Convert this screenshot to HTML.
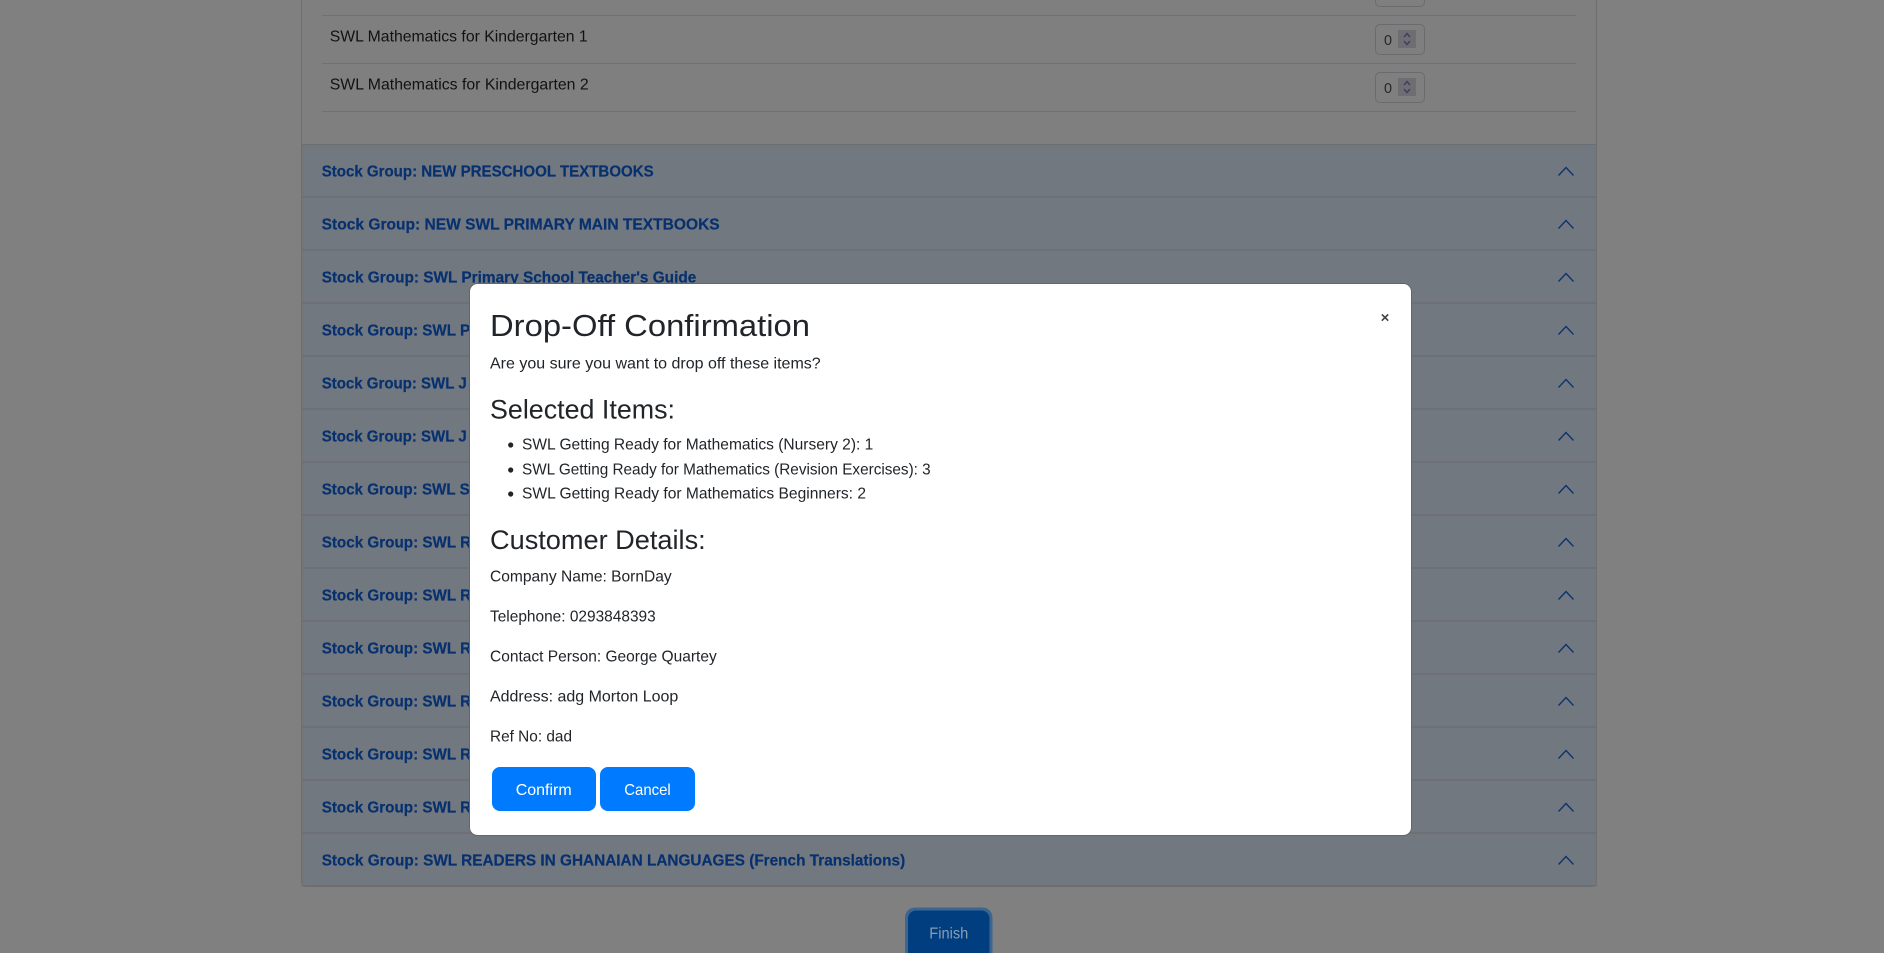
<!DOCTYPE html>
<html lang="en">
<head>
<meta charset="utf-8">
<title>Drop-Off Confirmation</title>
<style>
html,body{margin:0;padding:0;width:1884px;height:953px;overflow:hidden;background:#808080}
svg{display:block;position:absolute;left:0;top:0}
text{font-family:"Liberation Sans",Arial,sans-serif}
.row{font-size:16px;fill:#111213}
.hd{font-size:15.5px;font-weight:700;fill:#07306f;stroke:#07306f;stroke-width:.2}
.chev{fill:none;stroke:#08336f;stroke-width:1.3}
.div{fill:#6e7075}
.m{font-size:16px;fill:#212529}
.h2{font-size:31px;fill:#212529}
.h3{font-size:27px;fill:#212529}
.btn{font-size:16px;fill:#fff}
.sp{fill:none;stroke:#3f3c68;stroke-width:1.4}
</style>
</head>
<body>
<svg width="1884" height="953" viewBox="0 0 1884 953" xmlns="http://www.w3.org/2000/svg">
  <rect width="1884" height="953" fill="#808080"/>
  <!-- card -->
  <rect x="301.5" y="-10" width="1295" height="896.5" rx="4" fill="#7f7f7f" stroke="#6f6f6f"/>
  <!-- table rows -->
  <rect x="322" y="15" width="1254" height="1" fill="#6f7173"/>
  <rect x="322" y="63" width="1254" height="1" fill="#6f7173"/>
  <rect x="322" y="111" width="1254" height="1" fill="#6f7173"/>
  <text class="row" x="329.7" y="41.6" textLength="258" lengthAdjust="spacingAndGlyphs">SWL Mathematics for Kindergarten 1</text>
  <text class="row" x="329.7" y="89.6" textLength="259" lengthAdjust="spacingAndGlyphs">SWL Mathematics for Kindergarten 2</text>
  <rect x="1375.5" y="-24.5" width="49" height="31" rx="4.5" fill="none" stroke="#696b6e"/>
  <rect x="1375.5" y="24.5" width="49" height="30" rx="4.5" fill="none" stroke="#696b6e"/>
  <rect x="1375.5" y="72.5" width="49" height="30" rx="4.5" fill="none" stroke="#696b6e"/>
  <text class="row" x="1384" y="45" font-size="15" textLength="8" lengthAdjust="spacingAndGlyphs" style="font-size:15px;fill:#26282b">0</text>
  <text class="row" x="1384" y="93" font-size="15" textLength="8" lengthAdjust="spacingAndGlyphs" style="font-size:15px;fill:#26282b">0</text>
  <rect x="1398" y="30" width="18" height="18" fill="#6e6e72"/>
  <rect x="1398" y="78" width="18" height="18" fill="#6e6e72"/>
  <path class="sp" d="M1404 37 L1407 33.5 L1410 37 M1404 41 L1407 44.5 L1410 41"/>
  <path class="sp" d="M1404 85 L1407 81.5 L1410 85 M1404 89 L1407 92.5 L1410 89"/>
  <!-- accordion headers -->
  <rect x="302" y="144" width="1294" height="742" fill="#72787f"/>
  <rect x="302" y="144" width="1294" height="1" fill="#6c6e72"/>
  <rect class="div" x="302" y="196" width="1294" height="2"/>
  <rect class="div" x="302" y="249" width="1294" height="2"/>
  <rect class="div" x="302" y="302" width="1294" height="2"/>
  <rect class="div" x="302" y="355" width="1294" height="2"/>
  <rect class="div" x="302" y="408" width="1294" height="2"/>
  <rect class="div" x="302" y="461" width="1294" height="2"/>
  <rect class="div" x="302" y="514" width="1294" height="2"/>
  <rect class="div" x="302" y="567" width="1294" height="2"/>
  <rect class="div" x="302" y="620" width="1294" height="2"/>
  <rect class="div" x="302" y="673" width="1294" height="2"/>
  <rect class="div" x="302" y="726" width="1294" height="2"/>
  <rect class="div" x="302" y="779" width="1294" height="2"/>
  <rect class="div" x="302" y="832" width="1294" height="2"/>
  <rect x="302" y="885" width="1294" height="1.5" fill="#6c6e72"/>
  <rect x="301.5" y="144" width="1" height="742" fill="#6f6f6f"/>
  <rect x="1596" y="144" width="1" height="742" fill="#6f6f6f"/>

  <text class="hd" x="321.7" y="176.7" textLength="332" lengthAdjust="spacingAndGlyphs">Stock Group: NEW PRESCHOOL TEXTBOOKS</text>
  <text class="hd" x="321.7" y="229.7" textLength="398" lengthAdjust="spacingAndGlyphs">Stock Group: NEW SWL PRIMARY MAIN TEXTBOOKS</text>
  <text class="hd" x="321.7" y="282.7" textLength="374.6" lengthAdjust="spacingAndGlyphs">Stock Group: SWL Primary School Teacher's Guide</text>
  <text class="hd" x="321.7" y="335.7" textLength="148.5" lengthAdjust="spacingAndGlyphs">Stock Group: SWL P</text>
  <text class="hd" x="321.7" y="388.7" textLength="145" lengthAdjust="spacingAndGlyphs">Stock Group: SWL J</text>
  <text class="hd" x="321.7" y="441.7" textLength="145" lengthAdjust="spacingAndGlyphs">Stock Group: SWL J</text>
  <text class="hd" x="321.7" y="494.7" textLength="148" lengthAdjust="spacingAndGlyphs">Stock Group: SWL S</text>
  <text class="hd" x="321.7" y="547.7" textLength="149.5" lengthAdjust="spacingAndGlyphs">Stock Group: SWL R</text>
  <text class="hd" x="321.7" y="600.7" textLength="149.5" lengthAdjust="spacingAndGlyphs">Stock Group: SWL R</text>
  <text class="hd" x="321.7" y="653.7" textLength="149.5" lengthAdjust="spacingAndGlyphs">Stock Group: SWL R</text>
  <text class="hd" x="321.7" y="706.7" textLength="149.5" lengthAdjust="spacingAndGlyphs">Stock Group: SWL R</text>
  <text class="hd" x="321.7" y="759.7" textLength="149.5" lengthAdjust="spacingAndGlyphs">Stock Group: SWL R</text>
  <text class="hd" x="321.7" y="812.7" textLength="149.5" lengthAdjust="spacingAndGlyphs">Stock Group: SWL R</text>
  <text class="hd" x="321.7" y="865.7" textLength="583.5" lengthAdjust="spacingAndGlyphs">Stock Group: SWL READERS IN GHANAIAN LANGUAGES (French Translations)</text>

  <path class="chev" d="M1558.5 175.5 L1566 167.5 L1573.5 175.5"/>
  <path class="chev" d="M1558.5 228.5 L1566 220.5 L1573.5 228.5"/>
  <path class="chev" d="M1558.5 281.5 L1566 273.5 L1573.5 281.5"/>
  <path class="chev" d="M1558.5 334.5 L1566 326.5 L1573.5 334.5"/>
  <path class="chev" d="M1558.5 387.5 L1566 379.5 L1573.5 387.5"/>
  <path class="chev" d="M1558.5 440.5 L1566 432.5 L1573.5 440.5"/>
  <path class="chev" d="M1558.5 493.5 L1566 485.5 L1573.5 493.5"/>
  <path class="chev" d="M1558.5 546.5 L1566 538.5 L1573.5 546.5"/>
  <path class="chev" d="M1558.5 599.5 L1566 591.5 L1573.5 599.5"/>
  <path class="chev" d="M1558.5 652.5 L1566 644.5 L1573.5 652.5"/>
  <path class="chev" d="M1558.5 705.5 L1566 697.5 L1573.5 705.5"/>
  <path class="chev" d="M1558.5 758.5 L1566 750.5 L1573.5 758.5"/>
  <path class="chev" d="M1558.5 811.5 L1566 803.5 L1573.5 811.5"/>
  <path class="chev" d="M1558.5 864.5 L1566 856.5 L1573.5 864.5"/>

  <!-- finish button -->
  <rect x="905" y="907.5" width="87.5" height="70" rx="10" fill="#3c668f"/>
  <rect x="908" y="910.5" width="81.5" height="64" rx="8" fill="#003e80"/>
  <text x="929.3" y="938.5" font-size="16" fill="#8a9db3" textLength="39" lengthAdjust="spacingAndGlyphs">Finish</text>

  <!-- modal -->
  <rect x="469.5" y="283.5" width="942" height="552" rx="8" fill="#fff" stroke="#666"/>
  <text class="h2" x="490" y="336.2" textLength="320" lengthAdjust="spacingAndGlyphs">Drop-Off Confirmation</text>
  <text class="m" x="490" y="368.4" textLength="330.7" lengthAdjust="spacingAndGlyphs">Are you sure you want to drop off these items?</text>
  <text class="h3" x="490" y="418.3" textLength="185" lengthAdjust="spacingAndGlyphs">Selected Items:</text>
  <circle cx="510.7" cy="445" r="2.6" fill="#212529"/>
  <circle cx="510.7" cy="470" r="2.6" fill="#212529"/>
  <circle cx="510.7" cy="494" r="2.6" fill="#212529"/>
  <text class="m" x="522" y="449.7" textLength="351.3" lengthAdjust="spacingAndGlyphs">SWL Getting Ready for Mathematics (Nursery 2): 1</text>
  <text class="m" x="522" y="474.7" textLength="408.7" lengthAdjust="spacingAndGlyphs">SWL Getting Ready for Mathematics (Revision Exercises): 3</text>
  <text class="m" x="522" y="498.7" textLength="344" lengthAdjust="spacingAndGlyphs">SWL Getting Ready for Mathematics Beginners: 2</text>
  <text class="h3" x="490" y="549" textLength="215.7" lengthAdjust="spacingAndGlyphs">Customer Details:</text>
  <text class="m" x="490" y="581.5" textLength="181.7" lengthAdjust="spacingAndGlyphs">Company Name: BornDay</text>
  <text class="m" x="490" y="621.5" textLength="165.7" lengthAdjust="spacingAndGlyphs">Telephone: 0293848393</text>
  <text class="m" x="490" y="661.5" textLength="226.7" lengthAdjust="spacingAndGlyphs">Contact Person: George Quartey</text>
  <text class="m" x="490" y="701.5" textLength="188.3" lengthAdjust="spacingAndGlyphs">Address: adg Morton Loop</text>
  <text class="m" x="490" y="741.5" textLength="82" lengthAdjust="spacingAndGlyphs">Ref No: dad</text>
  <rect x="492" y="767" width="104" height="44" rx="8" fill="#007bff"/>
  <rect x="600" y="767" width="95" height="44" rx="8" fill="#007bff"/>
  <text class="btn" x="515.7" y="795.2" textLength="56" lengthAdjust="spacingAndGlyphs">Confirm</text>
  <text class="btn" x="624.3" y="795.2" textLength="46.4" lengthAdjust="spacingAndGlyphs">Cancel</text>
  <text x="1385" y="322.5" font-size="15" font-weight="700" fill="#444" text-anchor="middle">×</text>
</svg>
</body>
</html>
